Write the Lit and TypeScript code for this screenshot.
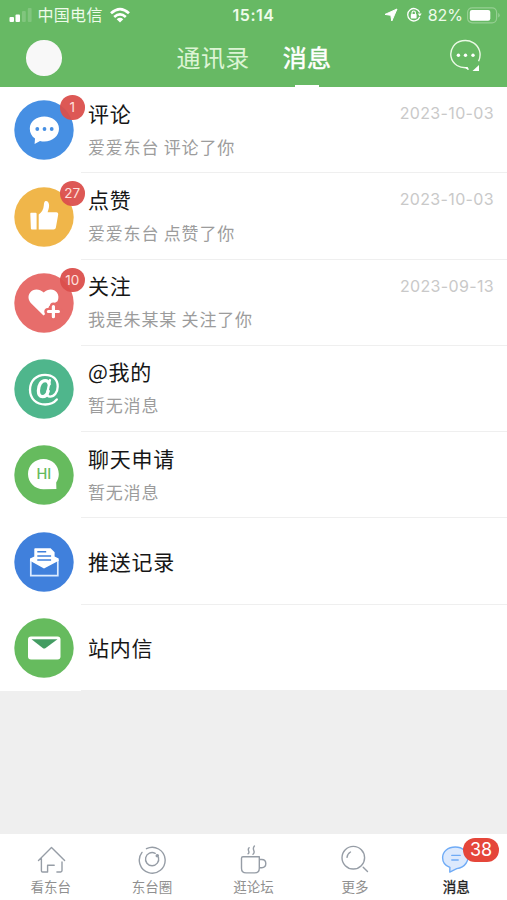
import { LitElement, html, css, svg } from "lit";
import { customElement, property } from "lit/decorators.js";

const rowIcons: Record<string, unknown> = {
  comment: svg`<circle cx="30" cy="30" r="29.7" fill="#468fe3"/>
    <path d="M30.3 16.5c8.2 0 14.7 5 14.7 12.2s-6.5 12.7-14.7 12.7c-1.5 0-3 0-4.3-.5l-5.4 3.1.4-5.4c-3.3-2.3-5.2-5.8-5.2-9.900 0-7.200 6.300-12.200 14.500-12.200z" fill="#fff"/>
    <g fill="#468fe3"><circle cx="23.3" cy="29" r="1.9"/><circle cx="30.5" cy="29" r="1.9"/><circle cx="37.7" cy="29" r="1.9"/></g>`,
  like: svg`<circle cx="30" cy="30" r="29.7" fill="#f0b64a"/>
    <path d="M17 25.800h4.600q1 0 1 1v15.600h-4.700q-1 0-1-1l-.6-14.600q0-1 .7-1zM24.700 42.400V27.500c3-2.200 4.800-5 5.100-9 .1-2.700.7-4.500 2.100-4.500 2 0 3.200 2 3.200 4.600 0 2.500-.8 4.500-1.500 6.700h8.700c1.500 0 2.100 1 1.900 2.300l-2.300 12.900c-.3 1.300-1 1.900-2.400 1.900z" fill="#fff"/>`,
  follow: svg`<circle cx="30" cy="30" r="29.7" fill="#e76d6b"/>
    <path d="M29.500 42.600 17.300 30.400c-3.200-3.300-3.700-7.500-1.300-10.700 3.200-4.300 9.300-4.300 13.700-.2 4.200-4.100 10.200-4.100 13.200-.1 1.900 2.700 2 5.900.6 8.900l-3.700 2.300-4.600 2.400-2.200 5.300v1.300z" fill="#fff"/>
    <path d="M39.400 32.900v11.200M33.800 38.500H45" stroke="#e76d6b" stroke-width="7" stroke-linecap="round"/>
    <path d="M39.400 33.500v10.200M34.400 38.500h10" stroke="#fff" stroke-width="3.200" stroke-linecap="round"/>`,
  mention: svg`<circle cx="30" cy="30" r="29.7" fill="#4fb68c"/>
    <g fill="none" stroke="#fff" stroke-linecap="round"><path d="M42.800 40.500c-2.800 3.300-6.800 5-11.500 5-9.100 0-15.300-5.800-15.300-14.700 0-9 6.400-15 15-15 7.700 0 12.700 4.500 12.700 11.600 0 6.200-3.600 10.200-7.500 10.200-2.500 0-3.500-1.500-2.900-4.200l2.600-12.200" stroke-width="2.300"/>
    <path d="M35.200 25.200c-.6-2.400-2-3.500-4-3.500-4 0-6.800 4.700-6.800 10.100 0 3.800 1.500 5.900 4.100 5.900 2.700 0 4.800-2.300 5.700-5.700" stroke-width="3.300"/></g>`,
  hi: svg`<circle cx="30" cy="30" r="29.7" fill="#66bb5e"/>
    <path d="M29.500 14c8.700 0 15.300 6.400 15.300 15 0 3.200-.9 6-2.600 8.400l.2 6.600-12.900.2C20.800 44.200 14 37.600 14 29s6.800-15 15.500-15z" fill="#fff"/>
    <text x="29.800" y="34.300" text-anchor="middle" font-family="Inter, sans-serif" font-size="14.500" font-weight="500" fill="#66bb5e">HI</text>`,
  push: svg`<circle cx="30" cy="30" r="29.7" fill="#4080dc"/>
    <path d="M16.800 27.800v15.800h27V27.800" fill="none" stroke="#dcebff" stroke-width="1.700"/>
    <path d="M16 26.500l4.300-2V17q0-.8.8-.8h15.500l4 4v4.300l4.100 2v2.300L30 36.600l-14-7.800z" fill="#fff"/>
    <path d="M23.300 19.800h8.900M23.300 23.900h13.800M23.300 28h13.800" stroke="#4080dc" stroke-width="1.500"/>`,
  mail: svg`<circle cx="30" cy="30" r="29.7" fill="#66bb5e"/>
    <rect x="14" y="18.500" width="32.500" height="23" rx="3" fill="#fff"/>
    <path d="M17.500 21.300h26L31.700 30q-1.500 1-3 0z" fill="#439c62"/>`,
};

const tabIcons: Record<string, unknown> = {
  home: svg`<path d="M2.500 15.600 15.500 2.400l13.100 13.200M5.400 13.800v12q0 1.200 1.200 1.200h5v-6.800h6.600M26 17v8.600q0 1.400-1.400 1.400h-3.700"/>`,
  circle: svg`<path d="M9.500 3.700A12.900 12.900 0 1 1 5 7.400"/><path d="M18.200 8.300A6.600 6.600 0 1 0 21.500 12.500"/><circle cx="20.300" cy="10.800" r="1.100" fill="#969da6"/>`,
  cup: svg`<path d="M5 11.800h16.300v11.500q0 4.600-4.600 4.600H8.100q-4.600 0-4.600-4.600V13.300q0-1.500 1.500-1.500zM21.500 14.500h2.300q4 0 4 4.100t-4 4.100h-2.300M10.100 8.800c2.700-2-1.600-3.400 1-6M15 9.300c3.600-3-2-4.600 1.400-8.300"/>`,
  search: svg`<circle cx="13.300" cy="12.700" r="11.300"/><path d="M7 12.400q.4-3.700 3.500-5.400M23.200 22.200l4.300 4.300"/>`,
  message: svg`<path d="M14.300 2c7.500 0 12.600 4.700 12.600 10.800 0 6.700-5.700 10.600-12.600 11l-5.700 3.400.2-4.400C4.500 21.300 1.600 17.500 1.600 12.900 1.600 6.500 7 2 14.300 2z" fill="#dce9fd" stroke="none"/>
    <path d="M26.400 8.700c2 6.700-2 13.800-10.700 14.900l-6.900 3.500.1-4.700C4.500 20.800 1.600 17.200 1.600 12.700 1.600 6.300 7 2 14.300 2c3.600 0 6.800 1.200 9 3.200M10.800 10.400h8.400M10.800 15h6.400" stroke="#6fabf6"/>`,
};

@customElement("message-row")
class MessageRow extends LitElement {
  @property() icon = "";
  @property() heading = "";
  @property() note = "";
  @property() date = "";
  @property() count = "";

  static styles = css`
    :host { display: flex; height: 86.25px; box-sizing: border-box; padding-left: 14px; background: #fff; }
    .avatar { position: relative; width: 60px; height: 60px; margin: 13.3px 7px 0 0; flex: none; }
    .avatar svg { display: block; }
    .badge { position: absolute; left: 46px; top: -5.3px; width: 24.5px; height: 24.5px; border-radius: 50%; background: rgba(219, 79, 76, .95); color: #ffe0dd; font: 13.5px/24.5px Inter, sans-serif; text-align: center; }
    .body { flex: 1; display: flex; justify-content: space-between; padding: 0 13px 0 7px; border-bottom: 1.2px solid #efefef; }
    .text { display: flex; flex-direction: column; justify-content: center; }
    .title { font-size: 21px; line-height: 32px; letter-spacing: .75px; color: #161616; white-space: nowrap; }
    .note { font-size: 17px; line-height: 26px; letter-spacing: .8px; color: #9c9c9c; margin-top: 5px; white-space: nowrap; }
    .full { justify-content: flex-start; padding-top: 9.5px; }
    .date { font: 16px/20px Inter, sans-serif; color: #c9c9c9; letter-spacing: .35px; padding-top: 16.2px; }
  `;

  render() {
    return html`
      <div class="avatar">
        <svg width="60" height="60" viewBox="0 0 60 60">${rowIcons[this.icon]}</svg>
        ${this.count ? html`<span class="badge">${this.count}</span>` : null}
      </div>
      <div class="body">
        <div class="text ${this.note ? "full" : ""}">
          <span class="title">${this.heading}</span>
          ${this.note ? html`<span class="note">${this.note}</span>` : null}
        </div>
        ${this.date ? html`<span class="date">${this.date}</span>` : null}
      </div>`;
  }
}

const rows = [
  { icon: "comment", heading: "评论", note: "爱爱东台 评论了你", date: "2023-10-03", count: "1" },
  { icon: "like", heading: "点赞", note: "爱爱东台 点赞了你", date: "2023-10-03", count: "27" },
  { icon: "follow", heading: "关注", note: "我是朱某某 关注了你", date: "2023-09-13", count: "10" },
  { icon: "mention", heading: "@我的", note: "暂无消息" },
  { icon: "hi", heading: "聊天申请", note: "暂无消息" },
  { icon: "push", heading: "推送记录" },
  { icon: "mail", heading: "站内信" },
];

const tabs = [
  { icon: "home", label: "看东台" },
  { icon: "circle", label: "东台圈" },
  { icon: "cup", label: "逛论坛" },
  { icon: "search", label: "更多" },
  { icon: "message", label: "消息", count: "38" },
];

@customElement("app-root")
class AppRoot extends LitElement {
  static styles = css`
    :host { display: flex; flex-direction: column; height: 900px; width: 507px; background: #efefef; overflow: hidden; font-family: "Noto Sans CJK SC", sans-serif; }
    .header { height: 87px; background: #67b964; color: #fff; flex: none; }
    .status { display: grid; grid-template-columns: 1fr auto 1fr; height: 30px; align-items: center; font: 16px/30px Inter, "Noto Sans CJK SC", sans-serif; color: #eefbea; }
    .left, .right { display: flex; align-items: center; }
    .left { padding-left: 9px; }
    .carrier { margin: 0 7px 0 5.5px; letter-spacing: .3px; }
    .time { font-weight: 600; font-size: 16px; letter-spacing: .5px; }
    .right { justify-content: flex-end; padding-right: 7px; }
    .percent { margin: 0 4px 0 6px; letter-spacing: 0; }
    .lock { margin-left: 8px; }
    .nav { display: grid; grid-template-columns: 1fr auto 1fr; height: 57px; }
    .profile { width: 35.5px; height: 35.5px; border-radius: 50%; background: #f8f8f8; margin: 10px 0 0 26px; }
    .switch { display: flex; gap: 33px; font-size: 24px; line-height: 54.5px; letter-spacing: .4px; padding-left: 1px; }
    .choice { color: #dcf4d4; }
    .current { color: #fff; -webkit-text-stroke: .5px #fff; display: flex; flex-direction: column; align-items: center; }
    .current::after { content: ""; width: 24px; height: 3px; background: #fff; }
    .chat { justify-self: end; margin: 9px 25px 0 0; }
    .list { display: flex; flex-direction: column; }
    .tabs { margin-top: auto; height: 66px; display: grid; grid-template-columns: repeat(5, 1fr); background: #fff; flex: none; }
    .tab { position: relative; display: flex; flex-direction: column; align-items: center; padding-top: 11px; color: #909090; font-size: 13.5px; line-height: 20px; }
    .tab svg { display: block; margin-bottom: .6px; }
    .active { color: #1d1d1d; }
    .active .label { -webkit-text-stroke: .35px #1d1d1d; }
    .count { position: absolute; left: 57.5px; top: 4px; width: 36px; height: 24px; border-radius: 12px; background: #e5463a; color: #fff; font: 18px/24px Inter, sans-serif; text-align: center; }
  `;

  render() {
    return html`
      <header class="header">
        <div class="status">
          <div class="left">
            <svg width="23" height="16" viewBox="0 0 23 16"><g fill="#fff"><rect x=".5" y="10" width="4.5" height="5" rx="1"/><rect x="6.5" y="7.5" width="4.5" height="7.500" rx="1"/><g opacity=".17"><rect x="13" y="4" width="3.8" height="11" rx="1"/><rect x="18.8" y="1" width="3.8" height="14" rx="1"/></g></g></svg>
            <span class="carrier">中国电信</span>
            <svg width="20" height="16" viewBox="0 0 20 16"><g fill="none" stroke="#fff" stroke-width="2.7"><path d="M1 6.200Q10-2 19 6.200M4.200 9.900q5.800-5.100 11.600 0"/></g><path d="M6.700 12.200q3.300-2.700 6.600 0L10 15.500z" fill="#fff"/></svg>
          </div>
          <div class="time">15:14</div>
          <div class="right">
            <svg width="14" height="14" viewBox="0 0 14 14"><path d="M13 1 7.800 13 6.800 7.300 1 6.400z" fill="#fff" stroke="#fff" stroke-linejoin="round"/></svg>
            <svg class="lock" width="16" height="16" viewBox="0 0 16 16"><path d="M13.700 10A6.200 6.200 0 1 1 13.700 5.500" fill="none" stroke="#fff" stroke-width="1.300"/><path d="M11.800 6.500h3.900l-2 3z" fill="#fff"/><rect x="4.800" y="7" width="5.800" height="4.500" rx=".7" fill="#fff"/><path d="M6 7V5.700q0-1.700 1.700-1.700t1.700 1.700V7" fill="none" stroke="#fff" stroke-width="1.100"/></svg>
            <span class="percent">82%</span>
            <svg width="33" height="17" viewBox="0 0 33 17"><rect x=".6" y=".8" width="29" height="15" rx="4.500" fill="none" stroke="#96cf92" stroke-width="1.200"/><rect x="2.800" y="2.900" width="20.500" height="10.800" rx="2.200" fill="#fff"/><path d="M31.200 6q1.500.5 1.500 2.300t-1.500 2.300z" fill="#96cf92"/></svg>
          </div>
        </div>
        <div class="nav">
          <div class="profile"></div>
          <div class="switch"><span class="choice">通讯录</span><span class="current">消息</span></div>
          <svg class="chat" width="33" height="34" viewBox="0 0 33 34"><path d="M29.600 22.200C33 15 30.200 7.300 24.500 3.800 17.500-.4 8.300 1.500 4.300 7.300-.3 14 1.700 22.500 8 26.500c3.200 2 6.800 2.300 9.300 2.200l2.400 1.800" fill="none" stroke="#eaf9e5" stroke-width="1.400"/><path d="M15.500 28h3.300v3z" fill="#fff"/><path d="M30 26v6h-6.500z" fill="#fff"/><g fill="#fff"><circle cx="9.400" cy="16.300" r="1.700"/><circle cx="16.500" cy="16.300" r="1.700"/><circle cx="24" cy="16.300" r="1.700"/></g></svg>
        </div>
      </header>
      <main class="list">
        ${rows.map((r) => html`<message-row icon=${r.icon} heading=${r.heading} note=${r.note ?? ""} date=${r.date ?? ""} count=${r.count ?? ""}></message-row>`)}
      </main>
      <nav class="tabs">
        ${tabs.map((t) => html`<div class="tab ${t.count ? "active" : ""}">
          <svg width="30" height="30" viewBox="0 0 30 30" fill="none" stroke="#969da6" stroke-width="1.4" stroke-linecap="round" stroke-linejoin="round">${tabIcons[t.icon]}</svg>
          <span class="label">${t.label}</span>
          ${t.count ? html`<span class="count">${t.count}</span>` : null}
        </div>`)}
      </nav>`;
  }
}
